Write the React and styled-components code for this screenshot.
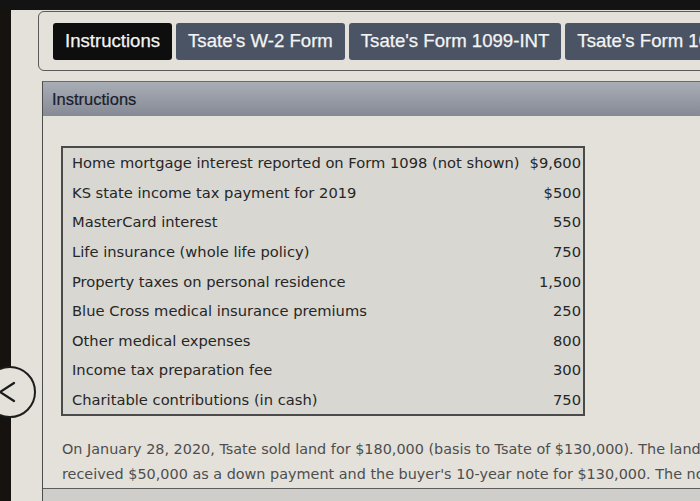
import styled, { createGlobalStyle } from "styled-components";

const GlobalStyle = createGlobalStyle`
  html, body {
    margin: 0;
    padding: 0;
    overflow: hidden;
    background: #e3e1da;
  }
  body {
    font-family: "DejaVu Sans", Verdana, sans-serif;
  }
`;

const rows = [
  ["Home mortgage interest reported on Form 1098 (not shown)", "$9,600"],
  ["KS state income tax payment for 2019", "$500"],
  ["MasterCard interest", "550"],
  ["Life insurance (whole life policy)", "750"],
  ["Property taxes on personal residence", "1,500"],
  ["Blue Cross medical insurance premiums", "250"],
  ["Other medical expenses", "800"],
  ["Income tax preparation fee", "300"],
  ["Charitable contributions (in cash)", "750"],
];

const tabs = [
  "Instructions",
  "Tsate's W-2 Form",
  "Tsate's Form 1099-INT",
  "Tsate's Form 1099-DIV",
];

const App = () => {
  return (
    <>
      <GlobalStyle />
      <Screen>
        <TopBezel />
        <Body>
          <Rail>
            <RailBar />
            <BackButton aria-label="Previous">
              <svg width="18" height="22" viewBox="0 0 18 22">
                <polyline
                  points="16,2 2,11 16,20"
                  fill="none"
                  stroke="#1c1c1c"
                  strokeWidth="2.2"
                  strokeLinecap="round"
                  strokeLinejoin="round"
                />
              </svg>
            </BackButton>
          </Rail>
          <Main>
            <TabFrame>
              {tabs.map((t, i) => (
                <Tab key={t} $active={i === 0}>
                  {t}
                </Tab>
              ))}
            </TabFrame>
            <Panel>
              <PanelHeader>Instructions</PanelHeader>
              <PanelBody>
                <ItemTable>
                  <tbody>
                    {rows.map(([label, amount]) => (
                      <tr key={label}>
                        <Label>{label}</Label>
                        <Amount>{amount}</Amount>
                      </tr>
                    ))}
                  </tbody>
                </ItemTable>
                <Paragraph>
                  <Line>
                    On January 28, 2020, Tsate sold land for $180,000 (basis to
                    Tsate of $130,000). The land was held as an investment. Tsate
                  </Line>
                  <Line>
                    received $50,000 as a down payment and the buyer's 10-year
                    note for $130,000. The note is payable at the rate of $13,000
                  </Line>
                </Paragraph>
              </PanelBody>
              <PanelFooter />
            </Panel>
          </Main>
        </Body>
      </Screen>
    </>
  );
};

export default App;

const Screen = styled.div`
  width: 1000px;
  height: 501px;
  display: flex;
  flex-direction: column;
  background: #e3e1da;
`;

const TopBezel = styled.div`
  height: 10px;
  background: #131313;
  flex-shrink: 0;
`;

const Body = styled.div`
  flex: 1;
  display: flex;
`;

const Rail = styled.div`
  width: 38px;
  position: relative;
  flex-shrink: 0;
`;

const RailBar = styled.div`
  width: 11px;
  height: 100%;
  background: #15120f;
`;

const BackButton = styled.button`
  position: absolute;
  left: -16px;
  top: 356px;
  width: 52px;
  height: 52px;
  border-radius: 50%;
  border: 2.5px solid #1c1c1c;
  background: #e3e1da;
  display: flex;
  align-items: center;
  justify-content: flex-end;
  padding: 0 18px 0 0;
  box-sizing: border-box;
`;

const Main = styled.div`
  flex: 1;
  display: flex;
  flex-direction: column;
  padding-top: 1px;
`;

const TabFrame = styled.div`
  display: flex;
  align-items: center;
  gap: 4px;
  height: 60px;
  box-sizing: border-box;
  padding: 0 14px;
  border: 1.5px solid #5a5a5a;
  border-radius: 6px;
`;

const Tab = styled.div`
  height: 37px;
  display: flex;
  align-items: center;
  padding: 0 12px;
  border-radius: 3px;
  background: ${(p) => (p.$active ? "#0e0e0e" : "#4b5465")};
  color: #f4f4f4;
  font-family: "Liberation Sans", Arial, sans-serif;
  font-size: 18.6px;
  -webkit-text-stroke: 0.25px #f4f4f4;
  white-space: nowrap;
`;

const Panel = styled.div`
  margin: 10px 0 0 4px;
  flex: 1;
  display: flex;
  flex-direction: column;
  border-left: 1.5px solid #4d4d4d;
  border-top: 1px solid #6a6a6a;
`;

const PanelHeader = styled.div`
  height: 34px;
  display: flex;
  align-items: center;
  padding-left: 9px;
  background: linear-gradient(#a9adb6, #858a95);
  color: #1a1d2a;
  font-family: "Liberation Sans", Arial, sans-serif;
  font-size: 16.5px;
  -webkit-text-stroke: 0.2px #1a1d2a;
`;

const PanelBody = styled.div`
  padding: 30px 0 0 18px;
  height: 373px;
  box-sizing: border-box;
  border-bottom: 1.5px solid #5d5d5d;
`;

const PanelFooter = styled.div`
  flex: 1;
  background: #cfcecb;
`;

const ItemTable = styled.table`
  width: 524px;
  border-collapse: collapse;
  border: 2px solid #4a4a4a;
  background: #d8d7d2;
`;

const Label = styled.td`
  height: 29.6px;
  padding: 0 0 0 9px;
  font-size: 14.7px;
  color: #262626;
  white-space: nowrap;
`;

const Amount = styled.td`
  padding: 0 2px 0 0;
  text-align: right;
  font-size: 14.7px;
  color: #262626;
  white-space: nowrap;
`;

const Paragraph = styled.div`
  margin-top: 21px;
  padding-left: 1px;
  color: #4e4e4e;
  font-size: 14.4px;
  line-height: 25px;
`;

const Line = styled.span`
  display: block;
  white-space: nowrap;
`;
